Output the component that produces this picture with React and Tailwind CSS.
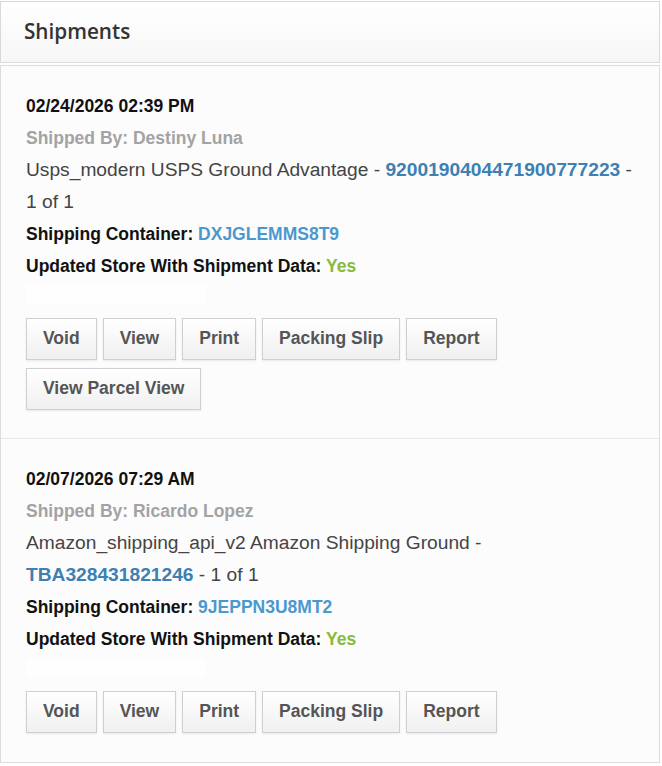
import React from 'react';

const shipments = [
    {
        date: '02/24/2026 02:39 PM',
        shippedBy: 'Destiny Luna',
        service: 'Usps_modern USPS Ground Advantage',
        tracking: '9200190404471900777223',
        container: 'DXJGLEMMS8T9',
        parcelView: true,
    },
    {
        date: '02/07/2026 07:29 AM',
        shippedBy: 'Ricardo Lopez',
        service: 'Amazon_shipping_api_v2 Amazon Shipping Ground',
        tracking: 'TBA328431821246',
        container: '9JEPPN3U8MT2',
        parcelView: false,
    },
];

function ActionButton({ children }) {
    return (
        <button
            type="button"
            className="h-[42px] px-[16px] border border-[#cfcfcf] bg-gradient-to-b from-white to-[#f0f0f0] shadow-[0_1px_2px_rgba(0,0,0,0.08)] text-[17.5px] font-bold text-[#555] leading-none"
        >
            {children}
        </button>
    );
}

function ShipmentRow({ s, last }) {
    return (
        <div className={`px-[25px] pt-[24px] ${last ? 'pb-[29px]' : 'pb-[28px] border-b border-[#e8e8e8]'}`}>
            <div className="leading-[32px]">
                <div className="text-[17.5px] font-bold text-[#111]">{s.date}</div>
                <div className="text-[17.5px] font-bold text-[#a3a3a3]">Shipped By: {s.shippedBy}</div>
                <div className="text-[19.2px] text-[#444]">
                    {s.service} - <a className="font-bold text-[#3d80b3]">{s.tracking}</a> - 1 of 1
                </div>
                <div className="text-[17.5px] font-bold text-[#111]">
                    Shipping Container: <a className="text-[#4b98cf]">{s.container}</a>
                </div>
                <div className="text-[17.5px] font-bold text-[#111]">
                    Updated Store With Shipment Data: <span className="text-[#86bb3c]">Yes</span>
                </div>
            </div>
            {/* empty label slot */}
            <div className="mt-[3px] h-[20px] w-[180px] bg-[#fefefe]"></div>
            <div className="mt-[13px] flex flex-wrap gap-x-[6px] gap-y-[8px]">
                <ActionButton>Void</ActionButton>
                <ActionButton>View</ActionButton>
                <ActionButton>Print</ActionButton>
                <ActionButton>Packing Slip</ActionButton>
                <ActionButton>Report</ActionButton>
                {s.parcelView && <ActionButton>View Parcel View</ActionButton>}
            </div>
        </div>
    );
}

export default function App() {
    return (
        <div className="w-[662px] bg-white pt-px font-['Liberation_Sans',Arial,sans-serif]">
            <div className="w-[660px] h-[62px] border border-[#d9d9d9] bg-gradient-to-b from-white to-[#f6f6f6] flex items-center px-[23px]">
                <h2 className="text-[20.7px] font-semibold text-[#333] font-['Open_Sans',sans-serif]">Shipments</h2>
            </div>
            <div className="mt-[2px] w-[660px] border border-[#dcdcdc] bg-[#fcfcfc]">
                {shipments.map((s, i) => (
                    <ShipmentRow key={i} s={s} last={i === shipments.length - 1} />
                ))}
            </div>
        </div>
    );
}
